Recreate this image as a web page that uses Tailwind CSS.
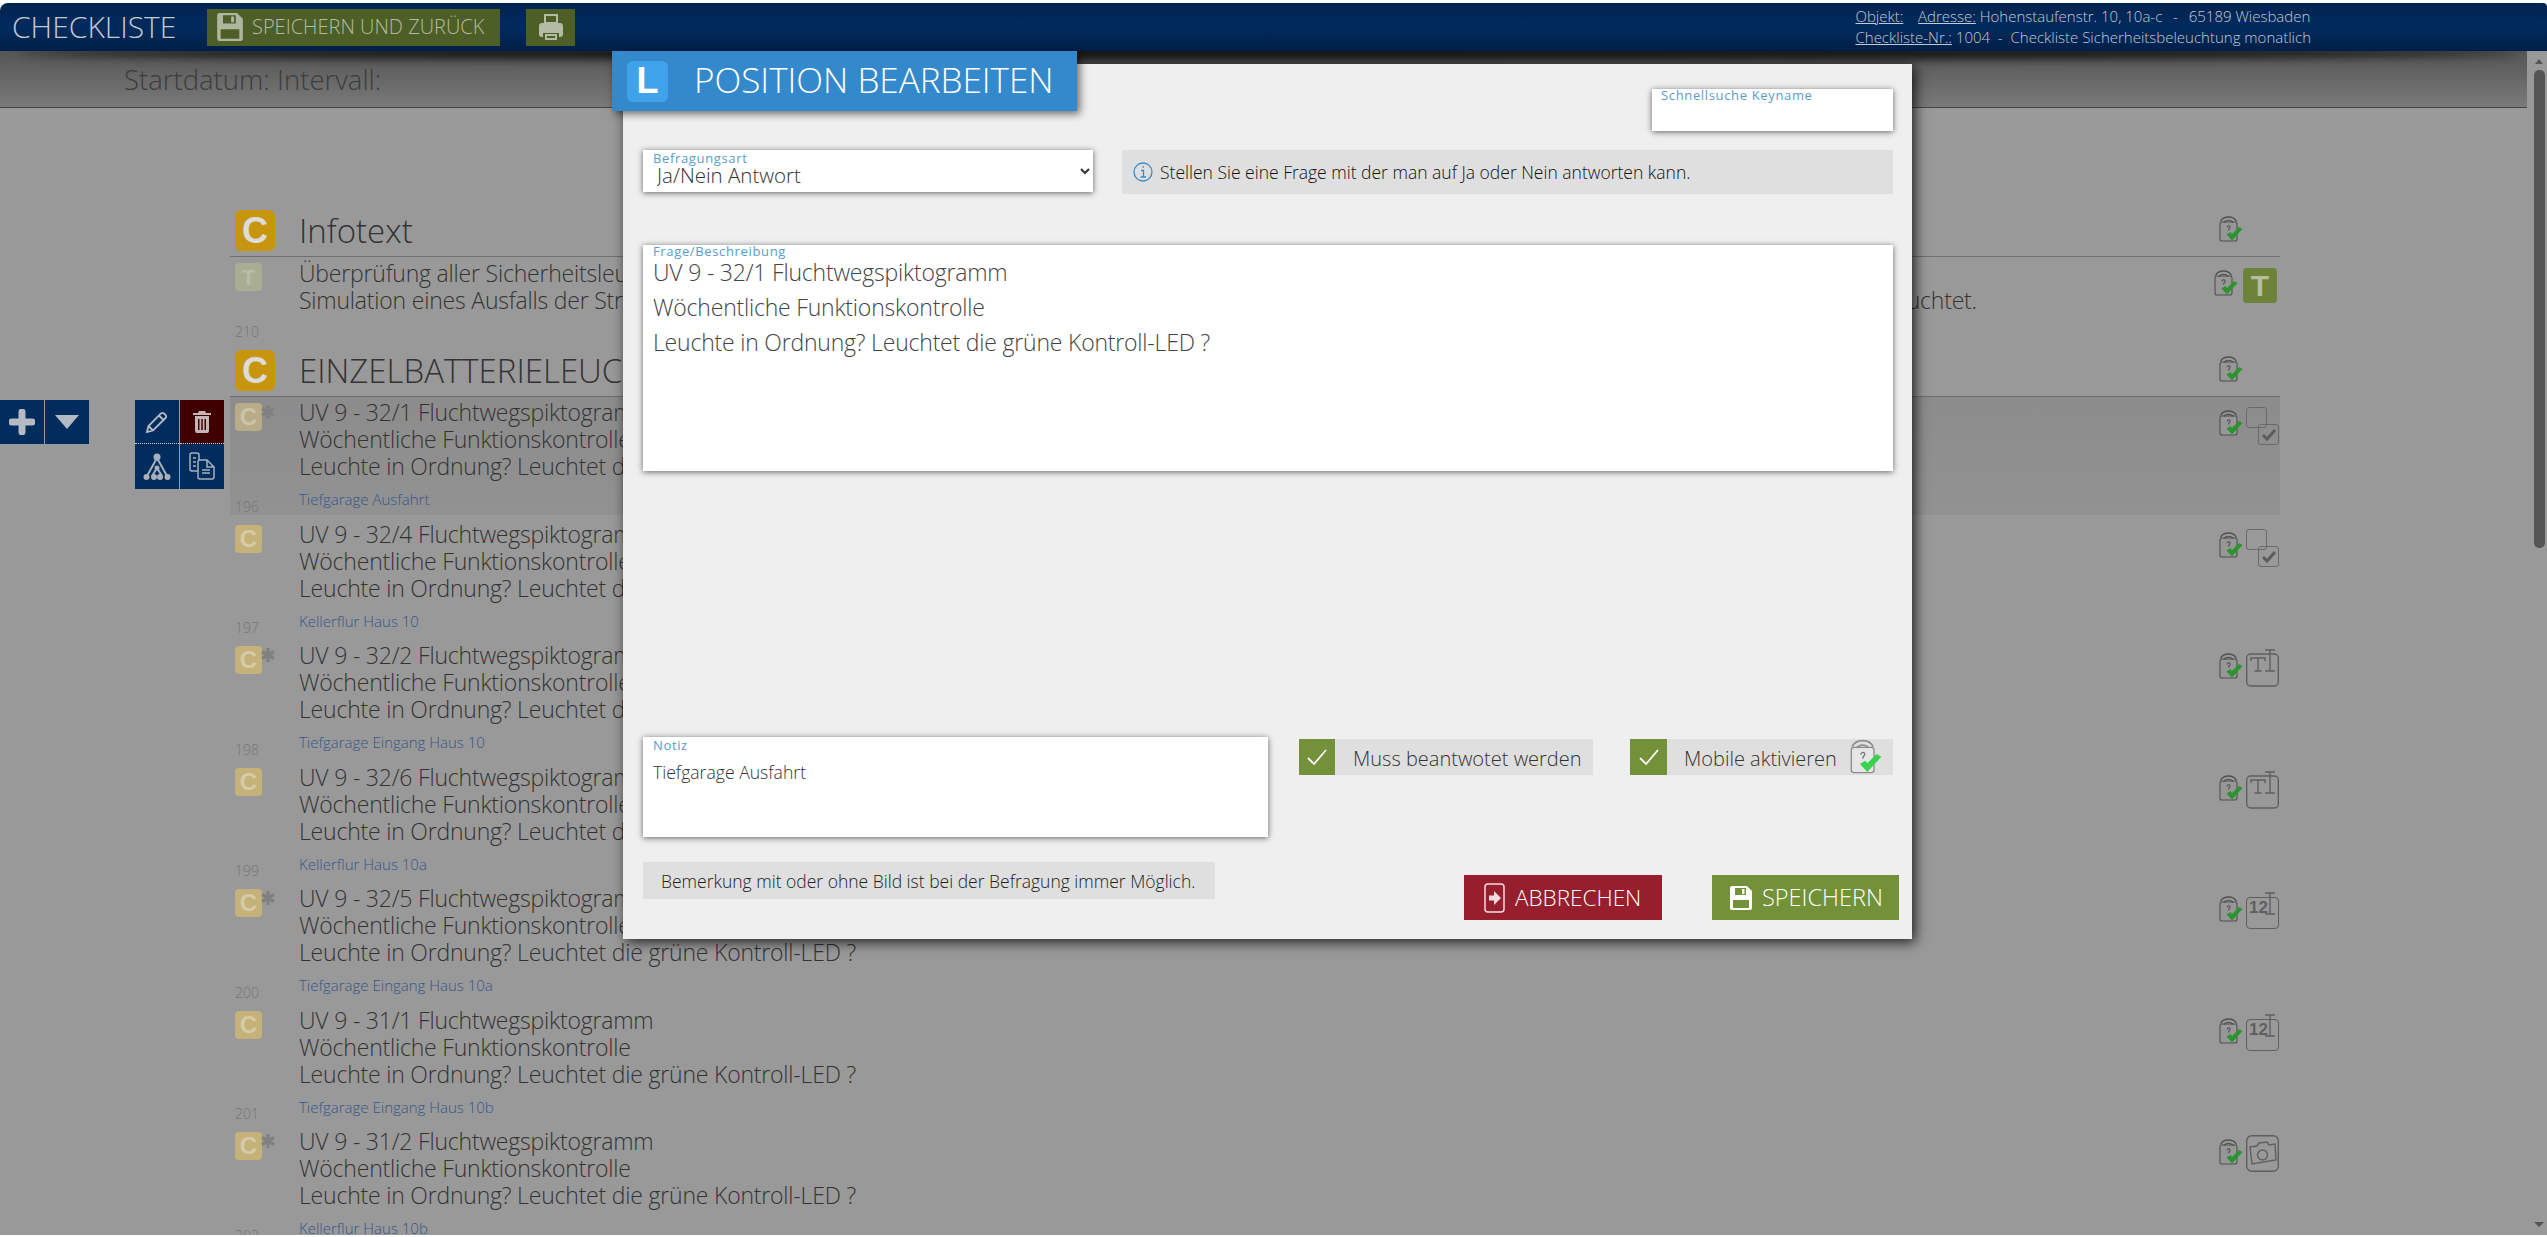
<!DOCTYPE html>
<html lang="de">
  <head>
    <meta charset="utf-8" />
    <title>Checkliste</title>
    <script src="https://cdn.jsdelivr.net/npm/@tailwindcss/browser@4"></script>
  </head>
  <body class="relative h-screen w-screen overflow-hidden bg-white font-['Open_Sans','Liberation_Sans',sans-serif] font-light">
    <!-- shared icons -->
    <svg class="hidden">
      <symbol id="sensor" viewBox="0 0 24 27">
        <rect x="1" y="7" width="17" height="19" rx="2" fill="#979797" stroke="#505050" stroke-width="1.100" />
        <path d="M1.500 6.500C4.500 .5 14.500 .5 17.500 6.500" fill="none" stroke="#505050" stroke-width="1.300" />
        <path d="M5 7.500c2.500-3 6.500-3 9 0" fill="none" stroke="#505050" stroke-width="1.200" />
        <path d="M8 12.500c.5-2.500 3.500-2 3 0-.4 1-1.400 1.500-1.400 3" fill="none" stroke="#505050" stroke-width="1.100" />
        <path d="M7.500 19.500l4-2.500 1.500 2 7-7 3.500 2L13 25.500z" fill="#2c942f" />
      </symbol>
      <symbol id="save" viewBox="0 0 24 24">
        <path fill="currentColor" fill-rule="evenodd" d="M3 0h15l5 5v17a2 2 0 0 1-2 2H3a2 2 0 0 1-2-2V2a2 2 0 0 1 2-2z M6 2v7h11V2z M13 3h2.500v5H13z M4 14v8h16v-8z" />
      </symbol>
      <symbol id="star" viewBox="0 0 16 16">
        <path d="M8 1v14M2 4.500l12 7M14 4.500l-12 7" stroke="#808080" stroke-width="3.200" fill="none" />
      </symbol>
    </svg>

    <div class="flex h-full flex-col pt-[3px] pb-[2px]">
      <!-- top bar -->
      <header class="relative z-10 flex h-[48px] shrink-0 items-center rounded-tl-[8px] rounded-tr-[4px] bg-linear-to-b from-[#02234f] via-[#012b5e] to-[#011f48] pl-[12px] text-[#c3cad4]">
        <span class="w-[195px] text-[30px] leading-none">CHECKLISTE</span>
        <button class="flex h-[37px] w-[293px] items-center gap-[8px] bg-[#4d5f27] pl-[9px] text-[20px] text-[#b3bba3]">
          <svg class="h-[30px] w-[28px]" style="color:#aeb6a0"><use href="#save" /></svg>
          <span>SPEICHERN UND ZURÜCK</span>
        </button>
        <button class="ml-[26px] flex h-[37px] w-[49px] items-center justify-center bg-[#4d5f27]">
          <svg class="h-[28px] w-[26px]" viewBox="0 0 26 28" fill="#b3bba3">
            <path fill-rule="evenodd" d="M6 1h14v9H6z M8 3v6h10V3z" />
            <path fill-rule="evenodd" d="M4 10h18a3 3 0 0 1 3 3v8a3 3 0 0 1-3 3h-1v-4H5v4H4a3 3 0 0 1-3-3v-8a3 3 0 0 1 3-3z" />
            <path fill-rule="evenodd" d="M7 21h12v6H7z M9 23v2h8v-2z" />
          </svg>
        </button>
        <div class="ml-auto mr-[236px] text-[15px] leading-[21px]">
          <div><span class="underline">Objekt:</span> &nbsp; <span class="ml-[3px] underline">Adresse:</span> Hohenstaufenstr. 10, 10a-c &nbsp;<span class="mx-[3px]">-</span>&nbsp; 65189 Wiesbaden</div>
          <div><span class="underline">Checkliste-Nr.:</span> 1004 &nbsp;-&nbsp; Checkliste Sicherheitsbeleuchtung monatlich</div>
        </div>
      </header>

      <div class="relative flex min-h-0 flex-1 bg-[#999999]">
        <div class="absolute top-[-5px] right-[30px] left-[20px] z-[5] h-[14px] rounded-[50%] bg-black/80 blur-[5px]"></div>

        <main class="min-w-0 flex-1 overflow-hidden">
          <div class="mr-[5px] flex h-[57px] items-center border-b border-[#454545] bg-linear-to-b from-[#555555] to-[#7a7a7a] pt-[2px] pl-[124px] text-[27.500px] text-[#3c3c3c]">Startdatum: Intervall:</div>

          <div class="ml-[230px] w-[2050px] pt-[100px] text-[#333333]">
            <!-- Infotext -->
            <div class="flex h-[49px] border-b border-[#6f6f6f]">
              <div class="ml-[5px] flex h-[41px] w-[40px] mt-[2px] items-center justify-center rounded-[6px] bg-[#c8960e] font-['Liberation_Sans',sans-serif] text-[36px] font-bold text-[#dcdcdc]">C</div>
              <div class="ml-[24px] pt-[1px] text-[33px] leading-[44px]">Infotext</div>
              <svg class="mt-[7px] mr-[37px] ml-auto h-[27px] w-[24px]"><use href="#sensor" /></svg>
            </div>
            <div class="flex h-[91px] pt-[6px] pb-[8px]">
              <div class="flex w-[69px] shrink-0 flex-col justify-between pl-[5px]">
                <div class="flex h-[28px] w-[27px] items-center justify-center rounded-[4px] bg-[#a9ad94] font-['Liberation_Sans',sans-serif] text-[22px] font-bold text-[#b9bca8]">T</div>
                <div class="text-[14px] leading-[16px] text-[#777777]">210</div>
              </div>
              <div class="-mt-[3px] text-[23px] leading-[27px] tracking-[-0.2px] whitespace-nowrap">
                Überprüfung aller Sicherheitsleuchten und Fluchtwegspiktogramme auf einwandfreie Funktion.<br />
                Simulation eines Ausfalls der Stromversorgung durch Betätigung des Prüftasters: Es wird kontrolliert, ob jede Leuchte im Batteriebetrieb einwandfrei und voll leuchtet.
              </div>
              <svg class="mt-[6px] ml-auto h-[27px] w-[24px]"><use href="#sensor" /></svg>
              <div class="mt-[5px] mr-[3px] ml-[5px] flex h-[35px] w-[34px] items-center justify-center rounded-[4px] bg-[#6d8339] font-['Liberation_Sans',sans-serif] text-[30px] font-bold text-[#b5bfa0]">T</div>
            </div>

            <!-- Einzelbatterieleuchten -->
            <div class="flex h-[49px] border-b border-[#6f6f6f]">
              <div class="ml-[5px] mt-[2px] flex h-[41px] w-[40px] items-center justify-center rounded-[6px] bg-[#c8960e] font-['Liberation_Sans',sans-serif] text-[36px] font-bold text-[#dcdcdc]">C</div>
              <div class="ml-[24px] pt-[1px] text-[33px] leading-[44px]">EINZELBATTERIELEUCHTEN</div>
              <svg class="mt-[7px] mr-[37px] ml-auto h-[27px] w-[24px]"><use href="#sensor" /></svg>
            </div>

            <!-- 196 -->
            <div class="mb-[4px] flex h-[117.500px] bg-linear-to-b from-[#8c8c8c] to-[#929292] pt-[6px]">
              <div class="flex w-[69px] shrink-0 flex-col justify-between pl-[5px]">
                <div class="relative flex h-[28px] w-[27px] items-center justify-center rounded-[4px] bg-[#b9ac88] font-['Liberation_Sans',sans-serif] text-[24px] font-bold text-[#cdc4a8]">C<svg class="absolute top-[1px] left-[25px] h-[16px] w-[16px]"><use href="#star" /></svg></div>
                <div class="text-[14px] leading-[16px] text-[#777777]">196</div>
              </div>
              <div class="-mt-[4px]">
                <div class="text-[23px] leading-[27px] tracking-[-0.2px]">UV 9 - 32/1 Fluchtwegspiktogramm<br />Wöchentliche Funktionskontrolle<br />Leuchte in Ordnung? Leuchtet die grüne Kontroll-LED ?</div>
                <div class="mt-[8px] text-[15px] leading-[22px] text-[#35558a]">Tiefgarage Ausfahrt</div>
              </div>
              <div class="ml-auto flex pr-[1px]">
                <svg class="mt-[6px] h-[27px] w-[24px]"><use href="#sensor" /></svg>
                <div class="relative mt-[4px] ml-[3px] h-[38px] w-[33px]">
                  <div class="h-[21px] w-[21px] rounded-[3px] border border-[#6a6a6a]"></div>
                  <div class="absolute top-[17px] left-[12px] flex h-[21px] w-[21px] items-center justify-center rounded-[3px] border border-[#6a6a6a]">
                    <svg class="h-[13px] w-[14px]" viewBox="0 0 14 13"><path d="M1 7l4 4 8-9" fill="none" stroke="#5c5c5c" stroke-width="3" /></svg>
                  </div>
                </div>
              </div>
            </div>

            <!-- 197 -->
            <div class="mb-[4px] flex h-[117.500px] pt-[6px]">
              <div class="flex w-[69px] shrink-0 flex-col justify-between pl-[5px]">
                <div class="flex h-[28px] w-[27px] items-center justify-center rounded-[4px] bg-[#c4b27a] font-['Liberation_Sans',sans-serif] text-[24px] font-bold text-[#d6cba6]">C</div>
                <div class="text-[14px] leading-[16px] text-[#777777]">197</div>
              </div>
              <div class="-mt-[4px]">
                <div class="text-[23px] leading-[27px] tracking-[-0.2px]">UV 9 - 32/4 Fluchtwegspiktogramm<br />Wöchentliche Funktionskontrolle<br />Leuchte in Ordnung? Leuchtet die grüne Kontroll-LED ?</div>
                <div class="mt-[8px] text-[15px] leading-[22px] text-[#35558a]">Kellerflur Haus 10</div>
              </div>
              <div class="ml-auto flex pr-[1px]">
                <svg class="mt-[6px] h-[27px] w-[24px]"><use href="#sensor" /></svg>
                <div class="relative mt-[4px] ml-[3px] h-[38px] w-[33px]">
                  <div class="h-[21px] w-[21px] rounded-[3px] border border-[#6a6a6a]"></div>
                  <div class="absolute top-[17px] left-[12px] flex h-[21px] w-[21px] items-center justify-center rounded-[3px] border border-[#6a6a6a]">
                    <svg class="h-[13px] w-[14px]" viewBox="0 0 14 13"><path d="M1 7l4 4 8-9" fill="none" stroke="#5c5c5c" stroke-width="3" /></svg>
                  </div>
                </div>
              </div>
            </div>

            <!-- 198 -->
            <div class="mb-[4px] flex h-[117.500px] pt-[6px]">
              <div class="flex w-[69px] shrink-0 flex-col justify-between pl-[5px]">
                <div class="relative flex h-[28px] w-[27px] items-center justify-center rounded-[4px] bg-[#c4b27a] font-['Liberation_Sans',sans-serif] text-[24px] font-bold text-[#d6cba6]">C<svg class="absolute top-[1px] left-[25px] h-[16px] w-[16px]"><use href="#star" /></svg></div>
                <div class="text-[14px] leading-[16px] text-[#777777]">198</div>
              </div>
              <div class="-mt-[4px]">
                <div class="text-[23px] leading-[27px] tracking-[-0.2px]">UV 9 - 32/2 Fluchtwegspiktogramm<br />Wöchentliche Funktionskontrolle<br />Leuchte in Ordnung? Leuchtet die grüne Kontroll-LED ?</div>
                <div class="mt-[8px] text-[15px] leading-[22px] text-[#35558a]">Tiefgarage Eingang Haus 10</div>
              </div>
              <div class="ml-auto flex pr-[1px]">
                <svg class="mt-[6px] h-[27px] w-[24px]"><use href="#sensor" /></svg>
                <svg class="mt-[3px] ml-[3px] h-[38px] w-[33px]" viewBox="0 0 33 38" fill="none" stroke="#5f5f5f" stroke-width="1.400">
                  <rect x="0.700" y="5" width="31.600" height="32" rx="4" />
                  <path d="M5 12V9h14v3M12 9v13M8.500 22h7M19 1h10M24 1v21M19 22h10" />
                </svg>
              </div>
            </div>

            <!-- 199 -->
            <div class="mb-[4px] flex h-[117.500px] pt-[6px]">
              <div class="flex w-[69px] shrink-0 flex-col justify-between pl-[5px]">
                <div class="flex h-[28px] w-[27px] items-center justify-center rounded-[4px] bg-[#c4b27a] font-['Liberation_Sans',sans-serif] text-[24px] font-bold text-[#d6cba6]">C</div>
                <div class="text-[14px] leading-[16px] text-[#777777]">199</div>
              </div>
              <div class="-mt-[4px]">
                <div class="text-[23px] leading-[27px] tracking-[-0.2px]">UV 9 - 32/6 Fluchtwegspiktogramm<br />Wöchentliche Funktionskontrolle<br />Leuchte in Ordnung? Leuchtet die grüne Kontroll-LED ?</div>
                <div class="mt-[8px] text-[15px] leading-[22px] text-[#35558a]">Kellerflur Haus 10a</div>
              </div>
              <div class="ml-auto flex pr-[1px]">
                <svg class="mt-[6px] h-[27px] w-[24px]"><use href="#sensor" /></svg>
                <svg class="mt-[3px] ml-[3px] h-[38px] w-[33px]" viewBox="0 0 33 38" fill="none" stroke="#5f5f5f" stroke-width="1.400">
                  <rect x="0.700" y="5" width="31.600" height="32" rx="4" />
                  <path d="M5 12V9h14v3M12 9v13M8.500 22h7M19 1h10M24 1v21M19 22h10" />
                </svg>
              </div>
            </div>

            <!-- 200 -->
            <div class="mb-[4px] flex h-[117.500px] pt-[6px]">
              <div class="flex w-[69px] shrink-0 flex-col justify-between pl-[5px]">
                <div class="relative flex h-[28px] w-[27px] items-center justify-center rounded-[4px] bg-[#c4b27a] font-['Liberation_Sans',sans-serif] text-[24px] font-bold text-[#d6cba6]">C<svg class="absolute top-[1px] left-[25px] h-[16px] w-[16px]"><use href="#star" /></svg></div>
                <div class="text-[14px] leading-[16px] text-[#777777]">200</div>
              </div>
              <div class="-mt-[4px]">
                <div class="text-[23px] leading-[27px] tracking-[-0.2px]">UV 9 - 32/5 Fluchtwegspiktogramm<br />Wöchentliche Funktionskontrolle<br />Leuchte in Ordnung? Leuchtet die grüne Kontroll-LED ?</div>
                <div class="mt-[8px] text-[15px] leading-[22px] text-[#35558a]">Tiefgarage Eingang Haus 10a</div>
              </div>
              <div class="ml-auto flex pr-[1px]">
                <svg class="mt-[6px] h-[27px] w-[24px]"><use href="#sensor" /></svg>
                <div class="relative mt-[3px] ml-[3px] h-[38px] w-[33px]">
                  <div class="absolute top-[5px] left-0 flex h-[32px] w-[33px] rounded-[4px] border border-[#5f5f5f] pl-[2px] font-['Liberation_Sans',sans-serif] text-[17px] leading-[20px] font-bold text-[#5f5f5f]">12</div>
                  <svg class="absolute top-0 left-0 h-[38px] w-[33px]" viewBox="0 0 33 38" fill="none" stroke="#5f5f5f" stroke-width="1.400"><path d="M19 1h10M24 1v21M19 22h10" /></svg>
                </div>
              </div>
            </div>

            <!-- 201 -->
            <div class="mb-[4px] flex h-[117.500px] pt-[6px]">
              <div class="flex w-[69px] shrink-0 flex-col justify-between pl-[5px]">
                <div class="flex h-[28px] w-[27px] items-center justify-center rounded-[4px] bg-[#c4b27a] font-['Liberation_Sans',sans-serif] text-[24px] font-bold text-[#d6cba6]">C</div>
                <div class="text-[14px] leading-[16px] text-[#777777]">201</div>
              </div>
              <div class="-mt-[4px]">
                <div class="text-[23px] leading-[27px] tracking-[-0.2px]">UV 9 - 31/1 Fluchtwegspiktogramm<br />Wöchentliche Funktionskontrolle<br />Leuchte in Ordnung? Leuchtet die grüne Kontroll-LED ?</div>
                <div class="mt-[8px] text-[15px] leading-[22px] text-[#35558a]">Tiefgarage Eingang Haus 10b</div>
              </div>
              <div class="ml-auto flex pr-[1px]">
                <svg class="mt-[6px] h-[27px] w-[24px]"><use href="#sensor" /></svg>
                <div class="relative mt-[3px] ml-[3px] h-[38px] w-[33px]">
                  <div class="absolute top-[5px] left-0 flex h-[32px] w-[33px] rounded-[4px] border border-[#5f5f5f] pl-[2px] font-['Liberation_Sans',sans-serif] text-[17px] leading-[20px] font-bold text-[#5f5f5f]">12</div>
                  <svg class="absolute top-0 left-0 h-[38px] w-[33px]" viewBox="0 0 33 38" fill="none" stroke="#5f5f5f" stroke-width="1.400"><path d="M19 1h10M24 1v21M19 22h10" /></svg>
                </div>
              </div>
            </div>

            <!-- 202 -->
            <div class="flex h-[117.500px] pt-[6px]">
              <div class="flex w-[69px] shrink-0 flex-col justify-between pl-[5px]">
                <div class="relative flex h-[28px] w-[27px] items-center justify-center rounded-[4px] bg-[#c4b27a] font-['Liberation_Sans',sans-serif] text-[24px] font-bold text-[#d6cba6]">C<svg class="absolute top-[1px] left-[25px] h-[16px] w-[16px]"><use href="#star" /></svg></div>
                <div class="text-[14px] leading-[16px] text-[#777777]">202</div>
              </div>
              <div class="-mt-[4px]">
                <div class="text-[23px] leading-[27px] tracking-[-0.2px]">UV 9 - 31/2 Fluchtwegspiktogramm<br />Wöchentliche Funktionskontrolle<br />Leuchte in Ordnung? Leuchtet die grüne Kontroll-LED ?</div>
                <div class="mt-[8px] text-[15px] leading-[22px] text-[#35558a]">Kellerflur Haus 10b</div>
              </div>
              <div class="ml-auto flex pr-[1px]">
                <svg class="mt-[6px] h-[27px] w-[24px]"><use href="#sensor" /></svg>
                <svg class="mt-[3px] ml-[3px] h-[37px] w-[33px]" viewBox="0 0 33 37" fill="none" stroke="#5f5f5f" stroke-width="1.400">
                  <rect x="0.700" y="0.700" width="31.600" height="35.600" rx="5" />
                  <path d="M4 12l7-1 2-3 8-1 2 3 6-1 1 16-24 4z" />
                  <circle cx="16.500" cy="20" r="5" />
                </svg>
              </div>
            </div>
          </div>
        </main>

        <!-- scrollbar -->
        <div class="flex w-[15px] shrink-0 flex-col items-center pt-[8px] pr-[1px] pb-[8px]">
          <div class="h-0 w-0 border-x-[4px] border-b-[5px] border-x-transparent border-b-[#555555]"></div>
          <div class="mt-[6px] h-[478px] w-[11px] rounded-[5px] bg-[#555555]"></div>
          <div class="mt-auto h-0 w-0 border-x-[5px] border-t-[5px] border-x-transparent border-t-[#555555]"></div>
        </div>
      </div>
    </div>

    <!-- hover tools next to the selected row -->
    <div class="absolute top-[400px] left-0 flex gap-px">
      <button class="flex h-[44px] w-[44px] items-center justify-center bg-[#012c5e]">
        <svg class="h-[26px] w-[26px]" viewBox="0 0 26 26"><path d="M13 3v20M3 13h20" stroke="#b5bbc4" stroke-width="7" stroke-linecap="round" /></svg>
      </button>
      <button class="flex h-[44px] w-[44px] items-center justify-center bg-[#012c5e]">
        <svg class="h-[16px] w-[24px]" viewBox="0 0 24 16"><path d="M0 1h24L12 15z" fill="#b5bbc4" /></svg>
      </button>
    </div>
    <div class="absolute top-[400px] left-[135px] grid w-[89px] grid-cols-2 gap-x-px">
      <button class="flex h-[44px] items-center justify-center border-b border-dotted border-[#c9d0d9] bg-[#012c5e]">
        <svg class="h-[24px] w-[24px]" viewBox="0 0 24 24" fill="none" stroke="#b5bbc4" stroke-width="1.800"><path d="M2 22l1.500-6L16 3.500a2 2 0 0 1 3 0l1.500 1.500a2 2 0 0 1 0 3L8 20.500z M14 5.500l4.500 4.500 M3.500 16l4.500 4.500" /></svg>
      </button>
      <button class="flex h-[44px] items-center justify-center border-b border-dotted border-[#c9d0d9] bg-[#3e0000]">
        <svg class="h-[22px] w-[18px]" viewBox="0 0 18 22"><path fill="#c7b5b5" fill-rule="evenodd" d="M6 0h6l1 2h5v2H0V2h5z M2 5h14v15a2 2 0 0 1-2 2H4a2 2 0 0 1-2-2z M5 8v11h1.500V8z M8.250 8v11h1.500V8z M11.500 8v11H13V8z" /></svg>
      </button>
      <button class="flex h-[45px] items-center justify-center bg-[#012c5e]">
        <svg class="h-[28px] w-[28px]" viewBox="0 0 28 28" fill="#a9b0ba" stroke="#a9b0ba" stroke-width="2"><path d="M14 5L4 23M14 5l10 18M14 15l-5 8M14 15l5 8" fill="none" /><circle cx="14" cy="4" r="2.500" /><circle cx="14" cy="15" r="1.500" /><circle cx="3.500" cy="24" r="2" /><circle cx="11" cy="24" r="2" /><circle cx="17" cy="24" r="2" /><circle cx="24.500" cy="24" r="2" /></svg>
      </button>
      <button class="flex h-[45px] items-start justify-center bg-[#012c5e] pt-[8px]">
        <svg class="h-[28px] w-[28px]" viewBox="0 0 28 28" fill="none" stroke="#a9b0ba" stroke-width="1.500"><path d="M10 19H4a2 2 0 0 1-2-2V3a2 2 0 0 1 2-2h5a2 2 0 0 1 2 2v5 M5 6h3M5 10h3M5 14h3" /><path d="M12 8h7l7 7v10a2 2 0 0 1-2 2H12a2 2 0 0 1-2-2V10a2 2 0 0 1 2-2z M19 8v7h7 M14 18h8M14 21h8" /></svg>
      </button>
    </div>

    <!-- dialog -->
    <div class="absolute top-[64px] left-[623px] z-20 h-[875px] w-[1289px] bg-[#efefef] pt-[25px] pr-[19px] pl-[20px] shadow-[3px_3px_12px_rgba(0,0,0,0.8)]">
      <div class="absolute top-[-13px] left-[-11px] flex h-[60px] w-[465px] items-center bg-[#3389cc] pl-[15px] text-[35px] text-white shadow-[3px_3px_8px_rgba(0,0,0,0.55)]">
        <div class="flex h-[41px] w-[41px] items-center justify-center rounded-[6px] bg-[#3fa2ea] font-['Liberation_Sans',sans-serif] text-[36px] font-bold">L</div>
        <span class="ml-[26px] pb-[2px]">POSITION BEARBEITEN</span>
      </div>

      <div class="flex justify-end">
        <div class="relative h-[42px] w-[241px] bg-white shadow-[0_1px_6px_rgba(0,0,0,0.6)]">
          <label class="absolute top-[-2px] left-[9px] text-[13px] leading-[16px] font-normal tracking-[0.05em] text-[#5a9ccb]">Schnellsuche Keyname</label>
        </div>
      </div>

      <div class="mt-[19px] flex items-start">
        <div class="relative h-[42px] w-[450px] bg-white shadow-[0_1px_6px_rgba(0,0,0,0.6)]">
          <label class="absolute top-0 left-[10px] text-[13px] leading-[16px] font-normal tracking-[0.05em] text-[#5a9ccb]">Befragungsart</label>
          <select class="h-full w-full pt-[7px] pl-[10px] text-[20.500px] font-light text-[#333333]">
            <option>Ja/Nein Antwort</option>
          </select>
        </div>
        <div class="ml-[29px] flex h-[44px] flex-1 items-center bg-[#dfdfdf] pl-[11px] text-[17.500px] font-light text-[#111111]">
          <svg class="mr-[7px] h-[20px] w-[20px]" viewBox="0 0 20 20" fill="none" stroke="#3a8ac8" stroke-width="1.300"><circle cx="10" cy="10" r="9" /><path d="M8 8.500h2.500V15M7.500 15h5.500M9.500 5h1.500" /></svg>
          Stellen Sie eine Frage mit der man auf Ja oder Nein antworten kann.
        </div>
      </div>

      <div class="relative mt-[51px] h-[226px] bg-white shadow-[0_1px_6px_rgba(0,0,0,0.6)]">
        <label class="absolute top-[-2px] left-[10px] text-[13px] leading-[16px] font-normal tracking-[0.05em] text-[#5a9ccb]">Frage/Beschreibung</label>
        <textarea class="block h-full w-full resize-none overflow-hidden pt-[10px] pl-[10px] text-[23px] leading-[35px] font-light tracking-[-0.2px] text-[#444444]">UV 9 - 32/1 Fluchtwegspiktogramm
Wöchentliche Funktionskontrolle
Leuchte in Ordnung? Leuchtet die grüne Kontroll-LED ?</textarea>
      </div>

      <div class="mt-[266px] flex items-start">
        <div class="relative h-[100px] w-[625px] shrink-0 bg-white shadow-[0_1px_6px_rgba(0,0,0,0.6)]">
          <label class="absolute top-0 left-[10px] text-[13px] leading-[16px] font-normal tracking-[0.05em] text-[#5a9ccb]">Notiz</label>
          <textarea class="block h-full w-full resize-none overflow-hidden pt-[22px] pl-[10px] text-[17.600px] leading-[26px] font-light text-[#333333]">Tiefgarage Ausfahrt</textarea>
        </div>
        <div class="mt-[2px] ml-[31px] flex h-[36px] w-[294px] shrink-0 items-center bg-[#dfdfdf] text-[20px] text-[#333333]">
          <span class="flex h-full w-[36px] items-center justify-center bg-[#739139]">
            <svg class="h-[18px] w-[22px]" viewBox="0 0 22 18"><path d="M2 10l6 6L20 2" fill="none" stroke="white" stroke-width="1.800" /></svg>
          </span>
          <span class="ml-[18px] pt-[3px]">Muss beantwotet werden</span>
        </div>
        <div class="relative mt-[2px] ml-[37px] flex h-[36px] w-[263px] shrink-0 items-center bg-[#dfdfdf] text-[20px] text-[#333333]">
          <span class="flex h-full w-[37px] items-center justify-center bg-[#739139]">
            <svg class="h-[18px] w-[22px]" viewBox="0 0 22 18"><path d="M2 10l6 6L20 2" fill="none" stroke="white" stroke-width="1.800" /></svg>
          </span>
          <span class="ml-[17px] pt-[3px]">Mobile aktivieren</span>
          <svg class="absolute top-[-3px] right-[11px]" width="32" height="40" viewBox="0 0 24 27">
            <rect x="1" y="7" width="17" height="19" rx="2" fill="#e6e6e6" stroke="#8c8c8c" stroke-width="1" />
            <path d="M1.500 6.500C4.500 .5 14.500 .5 17.500 6.500" fill="none" stroke="#8c8c8c" stroke-width="1.200" />
            <path d="M5 7.500c2.500-3 6.500-3 9 0" fill="none" stroke="#8c8c8c" stroke-width="1.200" />
            <path d="M8 12.500c.5-2.500 3.500-2 3 0-.4 1-1.400 1.500-1.400 3" fill="none" stroke="#777777" stroke-width="1" />
            <path d="M7.500 19.500l4-2.500 1.500 2 7-7 3.500 2L13 25.500z" fill="#38d24f" />
          </svg>
        </div>
      </div>

      <div class="mt-[25px] flex items-start">
        <div class="flex h-[37px] w-[572px] shrink-0 items-center bg-[#dfdfdf] pt-[2px] pl-[18px] text-[17.500px] text-[#222222]">Bemerkung mit oder ohne Bild ist bei der Befragung immer Möglich.</div>
        <button class="mt-[13px] ml-[249px] flex h-[45px] w-[198px] shrink-0 items-center bg-[#961e2d] pl-[20px] text-[22.500px] text-white">
          <svg class="mr-[10px] h-[30px] w-[21px]" viewBox="0 0 21 30" fill="none"><rect x="1" y="1" width="19" height="28" rx="3" stroke="#f3dcdc" stroke-width="1.500" /><path d="M5 12.500h5V8l7 7-7 7v-4.500H5z" fill="#f3dcdc" /></svg>
          ABBRECHEN
        </button>
        <button class="mt-[13px] ml-[50px] flex h-[45px] w-[187px] shrink-0 items-center gap-[9px] bg-[#739139] pl-[17px] text-[23.500px] text-white">
          <svg class="h-[24px] w-[24px] text-white"><use href="#save" /></svg>
          SPEICHERN
        </button>
      </div>
    </div>
  </body>
</html>
